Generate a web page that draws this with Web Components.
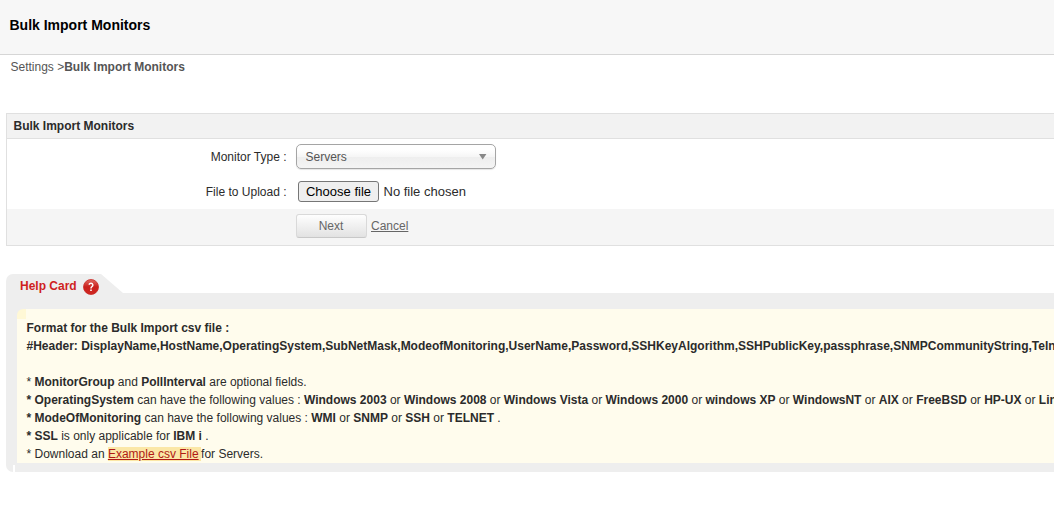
<!DOCTYPE html>
<html lang="en">
<head>
    <meta charset="UTF-8">
    <title>Bulk Import Monitors</title>
    <style>
        html, body {
            overflow: hidden;
        }

        body {
            margin: 0;
            background: #fff;
            color: #2b2b2b;
            font: 12px/18px "Liberation Sans", Arial, sans-serif;
        }

        help-card p {
            margin: 0;
            white-space: nowrap;
        }

        help-card p.gap {
            margin-top: 18px;
        }

        help-card a {
            color: #b01a14;
            background: #fbe7a6;
            padding-right: 2.5px;
        }
    </style>
</head>
<body>
    <page-header>Bulk Import Monitors</page-header>
    <bread-crumb>Settings &gt;<b>Bulk Import Monitors</b></bread-crumb>
    <form-panel>
        <span slot="title">Bulk Import Monitors</span>
        <form-row label="Monitor Type :"><select-box>Servers</select-box></form-row>
        <form-row label="File to Upload :"><file-picker></file-picker></form-row>
        <form-actions slot="footer"></form-actions>
    </form-panel>
    <help-card>
        <p><b>Format for the Bulk Import csv file :</b></p>
        <p><b>#Header: DisplayName,HostName,OperatingSystem,SubNetMask,ModeofMonitoring,UserName,Password,SSHKeyAlgorithm,SSHPublicKey,passphrase,SNMPCommunityString,Telnet</b></p>
        <p class="gap">* <b>MonitorGroup</b> and <b>PollInterval</b> are optional fields.</p>
        <p><b>* OperatingSystem</b> can have the following values : <b>Windows 2003</b> or <b>Windows 2008</b> or <b>Windows Vista</b> or <b>Windows 2000</b> or <b>windows XP</b> or <b>WindowsNT</b> or <b>AIX</b> or <b>FreeBSD</b> or <b>HP-UX</b> or <b>Linux</b></p>
        <p><b>* ModeOfMonitoring</b> can have the following values : <b>WMI</b> or <b>SNMP</b> or <b>SSH</b> or <b>TELNET</b> .</p>
        <p><b>* SSL</b> is only applicable for <b>IBM i</b> .</p>
        <p>* Download an <a href="#">Example csv File</a>for Servers.</p>
    </help-card>

    <script>
        class Base extends HTMLElement {
            constructor() {
                super().attachShadow({mode: 'open'});
            }

            connectedCallback() {
                this.shadowRoot.innerHTML = this.render();
            }
        }

        customElements.define('page-header', class extends Base {
            render() {
                return `
                    <style>
                        :host {
                            display: flex;
                            align-items: center;
                            box-sizing: border-box;
                            height: 55px;
                            padding: 0 9.5px 4px;
                            background: #f7f7f7;
                            border-bottom: 1px solid #d6d6d6;
                            color: #000;
                            font-size: 14px;
                            font-weight: bold;
                        }
                    </style>
                    <slot></slot>`;
            }
        });

        customElements.define('bread-crumb', class extends Base {
            render() {
                return `
                    <style>
                        :host {
                            display: block;
                            padding: 3px 10.5px 0;
                            height: 55px;
                            color: #555;
                        }
                    </style>
                    <slot></slot>`;
            }
        });

        customElements.define('form-panel', class extends Base {
            render() {
                return `
                    <style>
                        :host {
                            display: block;
                            margin-left: 6px;
                            border: 1px solid #e0e0e0;
                            border-right: 0;
                        }

                        header {
                            height: 24px;
                            line-height: 24px;
                            padding-left: 6.5px;
                            background: #f2f2f2;
                            border-bottom: 1px solid #e0e0e0;
                            font-weight: bold;
                        }
                    </style>
                    <header><slot name="title"></slot></header>
                    <slot></slot>
                    <slot name="footer"></slot>`;
            }
        });

        customElements.define('form-row', class extends Base {
            render() {
                return `
                    <style>
                        :host {
                            display: flex;
                            align-items: center;
                            height: 35px;
                        }

                        label {
                            width: 279.5px;
                            margin-right: 9.5px;
                            text-align: right;
                        }
                    </style>
                    <label>${this.getAttribute('label')}</label>
                    <slot></slot>`;
            }
        });

        customElements.define('select-box', class extends Base {
            render() {
                return `
                    <style>
                        :host {
                            display: flex;
                            align-items: center;
                            justify-content: space-between;
                            box-sizing: border-box;
                            width: 200px;
                            height: 25px;
                            padding: 0 8px 0 8.5px;
                            border: 1px solid #a5a5a5;
                            border-radius: 5px;
                            background: linear-gradient(#fff 20%, #f6f6f6 50%, #eee 52%, #f4f4f4 100%);
                            box-shadow: 0 1px 1px #0000001a;
                            color: #555;
                        }
                    </style>
                    <slot></slot>
                    <svg width="8" height="7" viewBox="0 0 8 7"><path d="M0 1h7.4L3.7 6.5z" fill="#888"/></svg>`;
            }
        });

        customElements.define('file-picker', class extends Base {
            render() {
                return `
                    <style>
                        :host {
                            display: flex;
                            align-items: center;
                            gap: 4.5px;
                            margin-left: 2px;
                            font-size: 13px;
                        }

                        button {
                            box-sizing: border-box;
                            width: 81px;
                            height: 21px;
                            padding: 0;
                            border: 1px solid #767676;
                            border-radius: 3px;
                            background: #efefef;
                            color: #000;
                            font: inherit;
                            line-height: 19px;
                        }
                    </style>
                    <button>Choose file</button>
                    <span>No file chosen</span>`;
            }
        });

        customElements.define('form-actions', class extends Base {
            render() {
                return `
                    <style>
                        :host {
                            display: flex;
                            align-items: center;
                            gap: 4px;
                            box-sizing: border-box;
                            height: 36px;
                            padding: 0 0 2px 289px;
                            background: #f5f5f5;
                        }

                        button {
                            box-sizing: border-box;
                            width: 71px;
                            height: 24px;
                            padding: 0 1px 0 0;
                            border: 1px solid #d9d9d9;
                            border-bottom-color: #c8c8c8;
                            border-radius: 3px;
                            background: linear-gradient(#fefefe, #e2e2e2);
                            color: #666;
                            font: inherit;
                        }

                        a {
                            color: #666;
                        }
                    </style>
                    <button>Next</button>
                    <a href="#">Cancel</a>`;
            }
        });

        customElements.define('help-card', class extends Base {
            render() {
                return `
                    <style>
                        :host {
                            display: block;
                            margin: 28px 0 0 6px;
                        }

                        .tab {
                            display: flex;
                            align-items: flex-start;
                            gap: 6px;
                            box-sizing: border-box;
                            width: 117px;
                            height: 19px;
                            padding: 3px 0 0 14px;
                            background: #eee;
                            border-top-left-radius: 7px;
                            clip-path: polygon(0 0, 95px 0, 117px 19px, 117px 26px, 0 26px);
                            color: #cf1f1f;
                            font-weight: bold;
                        }

                        svg {
                            flex: none;
                            margin-top: 1px;
                        }

                        .frame {
                            box-sizing: border-box;
                            height: 179px;
                            padding: 16px 0 9px 11px;
                            background: #eee;
                            border-bottom-left-radius: 7px;
                        }

                        .note {
                            box-sizing: border-box;
                            height: 154px;
                            padding: 10px 0 0 9.5px;
                            background: linear-gradient(#fff8d6, #fff8d6) 0 0 / 9px 10px no-repeat #fffced;
                            border-top-left-radius: 6px;
                            overflow: hidden;
                        }

                        .seam {
                            width: 2px;
                            height: 7px;
                            margin: 2px 0 0 -4px;
                            background: #fff;
                        }
                    </style>
                    <div class="tab">
                        Help Card
                        <svg width="17" height="17" viewBox="0 0 17 17">
                            <defs>
                                <linearGradient id="g" x2="0" y2="1">
                                    <stop offset="0" stop-color="#e06a62"/>
                                    <stop offset=".5" stop-color="#c9201c"/>
                                    <stop offset="1" stop-color="#cf2822"/>
                                </linearGradient>
                            </defs>
                            <circle cx="8" cy="9" r="7.5" fill="url(#g)" stroke="#c92a26" stroke-width=".8"/>
                            <path d="M5.9 6.6Q6.5 5.2 8 5.2T9.9 6.9Q9.9 7.9 8.9 8.6 8 9.2 8 10.4" fill="none" stroke="#fff" stroke-width="1.4"/>
                            <path d="M7.2 11.4h1.6V13H7.2z" fill="#fff"/>
                        </svg>
                    </div>
                    <div class="frame">
                        <div class="note"><slot></slot></div>
                        <div class="seam"></div>
                    </div>`;
            }
        });
    </script>
</body>
</html>
